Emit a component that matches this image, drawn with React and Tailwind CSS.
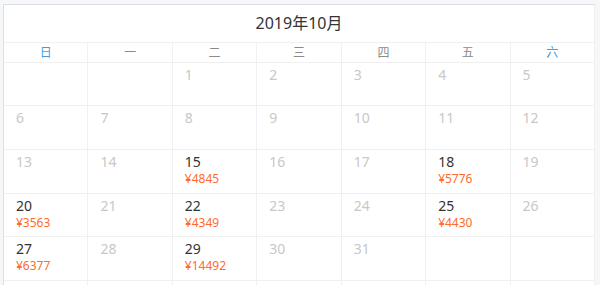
import React from "react";

const weekdays = ["日", "一", "二", "三", "四", "五", "六"];

const prices = {
  15: "¥4845",
  18: "¥5776",
  20: "¥3563",
  22: "¥4349",
  25: "¥4430",
  27: "¥6377",
  29: "¥14492",
};

const rowHeights = ["h-[43px]", "h-[44px]", "h-[44px]", "h-[43px]", "h-[44px]"];

export default function App() {
  // October 2019 starts on Tuesday
  const cells = [null, null, ...Array.from({ length: 31 }, (_, i) => i + 1), null, null];
  const rows = [];
  for (let i = 0; i < 5; i++) rows.push(cells.slice(i * 7, i * 7 + 7));

  return (
    <div
      className="w-[600px] h-[285px] overflow-hidden bg-[#f6f7f9] pt-1 pl-[3px]"
      style={{ fontFamily: '"Noto Sans", "Noto Sans CJK SC", sans-serif' }}
    >
      <div className="w-[592px] h-[300px] bg-white border-t border-l border-[#dcdfe3]">
        <div className="h-[38px] flex items-center justify-center border-b border-[#f0f0f0] border-r text-[16px] text-[#333] pb-[1px]">
          2019年10月
        </div>
        <div className="grid grid-cols-7 h-[20px]">
          {weekdays.map((w, i) => (
            <div
              key={w}
              className={`flex items-center justify-center border-r border-b border-[#f0f0f0] text-[12px] ${
                i === 0 || i === 6 ? "text-[#3b9fe6]" : "text-[#8a8a8a]"
              }`}
            >
              {w}
            </div>
          ))}
        </div>
        {rows.map((row, r) => (
          <div key={r} className={`grid grid-cols-7 ${rowHeights[r]}`}>
            {row.map((d, c) => (
              <div key={c} className="border-r border-b border-[#f0f0f0] pl-3 pt-[2px]">
                {d && (
                  <>
                    <div
                      className={`text-[14px] leading-[20px] ${
                        prices[d] ? "text-[#333]" : "text-[#c8c8c8]"
                      }`}
                    >
                      {d}
                    </div>
                    {prices[d] && (
                      <div className="text-[12px] leading-[14px] text-[#ff6b2c]">{prices[d]}</div>
                    )}
                  </>
                )}
              </div>
            ))}
          </div>
        ))}
        <div className="grid grid-cols-7 h-[20px]">
          {weekdays.map((w) => (
            <div key={w} className="border-r border-[#f0f0f0]" />
          ))}
        </div>
      </div>
    </div>
  );
}
